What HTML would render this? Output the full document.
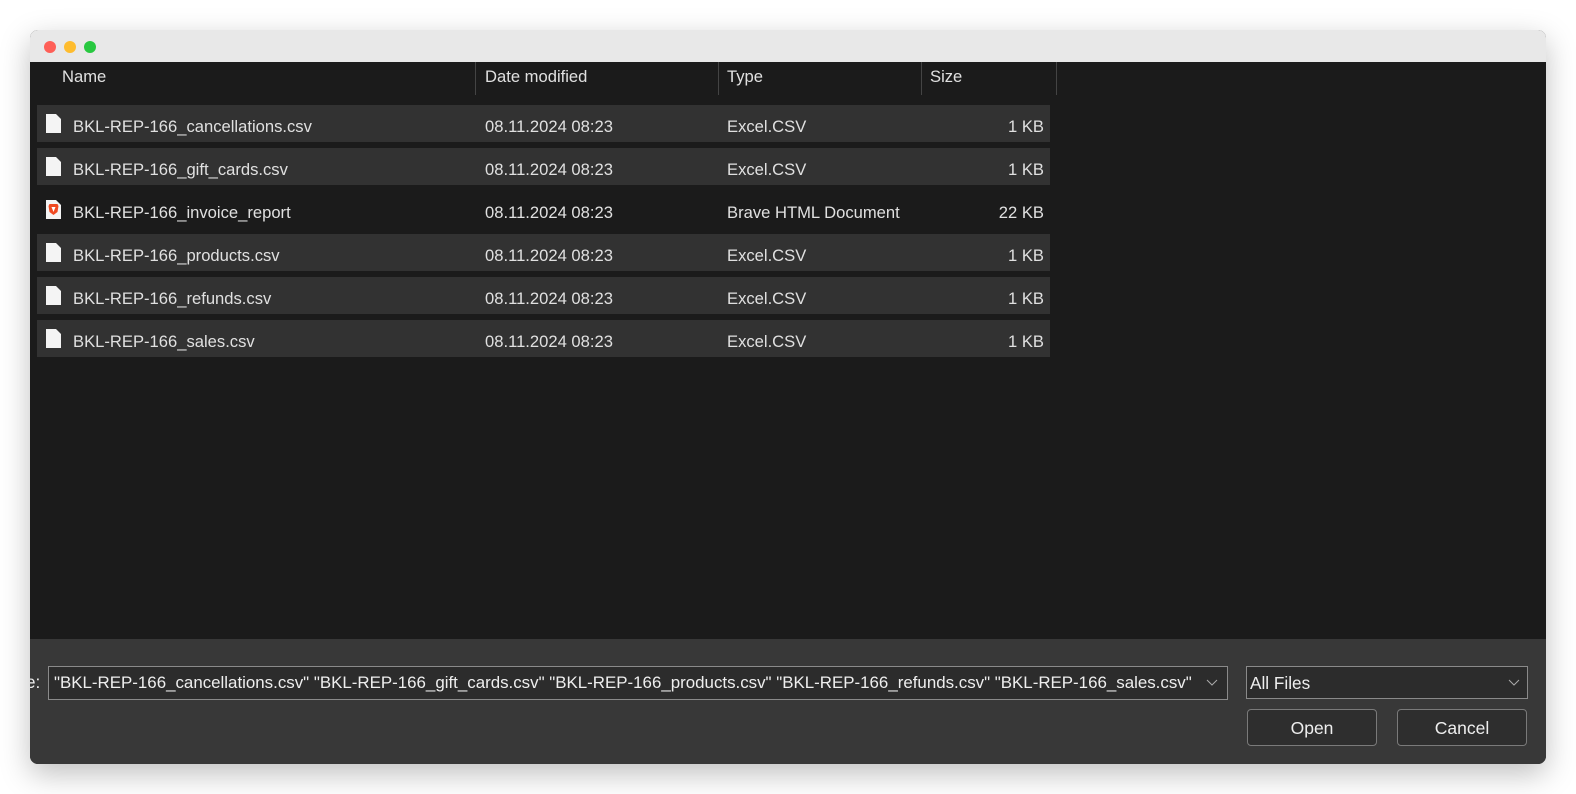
<!DOCTYPE html>
<html><head><style>
body{margin:0;width:1576px;height:794px;background:#fff;font-family:"Liberation Sans",sans-serif;overflow:hidden;position:relative}
.win{position:absolute;left:30px;top:30px;width:1516px;height:734px;border-radius:8px;overflow:hidden;box-shadow:0 10px 30px rgba(0,0,0,.25);background:#1b1b1b}
.tb{position:absolute;left:0;top:0;width:100%;height:32px;background:#e8e8e8}
.dot{position:absolute;top:11px;width:12px;height:12px;border-radius:50%}
.t{position:absolute;color:#e0e0e0;font-size:16.6px;white-space:nowrap;line-height:20px}
.sep{position:absolute;top:32px;width:1px;height:33px;background:#444}
.row{position:absolute;left:7px;width:1013px;height:37px;background:#323232}
.foot{position:absolute;left:0;top:609px;width:100%;height:125px;background:#383838}
.box{position:absolute;border:1px solid #8a8a8a;background:#2c2c2c;box-sizing:border-box}
.btn{position:absolute;border:1px solid #7a7a7a;border-radius:4px;background:#2e2e2e;box-sizing:border-box;color:#eee;font-size:17.5px;text-align:center;line-height:36px}
</style></head><body>
<div class="win">
<div class="tb"><div class="dot" style="left:14px;background:#fe5f57"></div><div class="dot" style="left:34px;background:#febc2e"></div><div class="dot" style="left:54px;background:#28c840"></div></div>
<div class="t" style="left:32px;top:37px">Name</div>
<div class="t" style="left:455px;top:37px">Date modified</div>
<div class="t" style="left:697px;top:37px">Type</div>
<div class="t" style="left:900px;top:37px">Size</div>
<div class="sep" style="left:445px"></div><div class="sep" style="left:688px"></div><div class="sep" style="left:891px"></div><div class="sep" style="left:1026px"></div>
<div class="row" style="top:75px"></div>
<div class="row" style="top:118px"></div>
<div class="row" style="top:204px"></div>
<div class="row" style="top:247px"></div>
<div class="row" style="top:290px"></div>
<svg style="position:absolute;left:0;top:0" width="60" height="340">
<g fill="#f4f4f4"><path d="M16 84h10l5 5v14h-15z"/><path d="M16 127h10l5 5v14h-15z"/><path d="M16 213h10l5 5v14h-15z"/><path d="M16 256h10l5 5v14h-15z"/><path d="M16 299h10l5 5v14h-15z"/></g>
<path d="M16 170h10l5 5v14h-15z" fill="#f4f4f4"/><path d="M19.5 174h8l1 2-1 6-4 3-4-3-1-6z" fill="#f04a22"/><path d="M21.5 177h4l-2 5z" fill="#fff"/>
</svg>
<div class="t" style="left:43px;top:87px">BKL-REP-166_cancellations.csv</div>
<div class="t" style="left:43px;top:130px">BKL-REP-166_gift_cards.csv</div>
<div class="t" style="left:43px;top:173px">BKL-REP-166_invoice_report</div>
<div class="t" style="left:43px;top:216px">BKL-REP-166_products.csv</div>
<div class="t" style="left:43px;top:259px">BKL-REP-166_refunds.csv</div>
<div class="t" style="left:43px;top:302px">BKL-REP-166_sales.csv</div>
<div class="t" style="left:455px;top:87px">08.11.2024 08:23</div>
<div class="t" style="left:455px;top:130px">08.11.2024 08:23</div>
<div class="t" style="left:455px;top:173px">08.11.2024 08:23</div>
<div class="t" style="left:455px;top:216px">08.11.2024 08:23</div>
<div class="t" style="left:455px;top:259px">08.11.2024 08:23</div>
<div class="t" style="left:455px;top:302px">08.11.2024 08:23</div>
<div class="t" style="left:697px;top:87px">Excel.CSV</div>
<div class="t" style="left:697px;top:130px">Excel.CSV</div>
<div class="t" style="left:697px;top:173px">Brave HTML Document</div>
<div class="t" style="left:697px;top:216px">Excel.CSV</div>
<div class="t" style="left:697px;top:259px">Excel.CSV</div>
<div class="t" style="left:697px;top:302px">Excel.CSV</div>
<div class="t" style="left:960px;width:54px;text-align:right;top:87px">1 KB</div>
<div class="t" style="left:960px;width:54px;text-align:right;top:130px">1 KB</div>
<div class="t" style="left:960px;width:54px;text-align:right;top:173px">22 KB</div>
<div class="t" style="left:960px;width:54px;text-align:right;top:216px">1 KB</div>
<div class="t" style="left:960px;width:54px;text-align:right;top:259px">1 KB</div>
<div class="t" style="left:960px;width:54px;text-align:right;top:302px">1 KB</div>
<div class="foot">
<div class="t" style="left:-4px;top:34px;color:#eee;font-size:17.1px">e:</div>
<div class="box" style="left:18px;top:27px;width:1180px;height:34px"></div>
<div class="t" style="left:24px;top:34px;color:#eee;font-size:16.9px">"BKL-REP-166_cancellations.csv" "BKL-REP-166_gift_cards.csv" "BKL-REP-166_products.csv" "BKL-REP-166_refunds.csv" "BKL-REP-166_sales.csv"</div>
<svg style="position:absolute;left:1176px;top:40px" width="12" height="8"><path d="M1 1l5 5 5-5" stroke="#aaa" fill="none"/></svg>
<div class="box" style="left:1216px;top:27px;width:282px;height:33px"></div>
<div class="t" style="left:1220px;top:34px;color:#eee;font-size:17.2px">All Files</div>
<svg style="position:absolute;left:1478px;top:40px" width="12" height="8"><path d="M1 1l5 5 5-5" stroke="#aaa" fill="none"/></svg>
<div class="btn" style="left:1217px;top:70px;width:130px;height:37px">Open</div>
<div class="btn" style="left:1367px;top:70px;width:130px;height:37px">Cancel</div>
</div>
</div>
</body></html>
